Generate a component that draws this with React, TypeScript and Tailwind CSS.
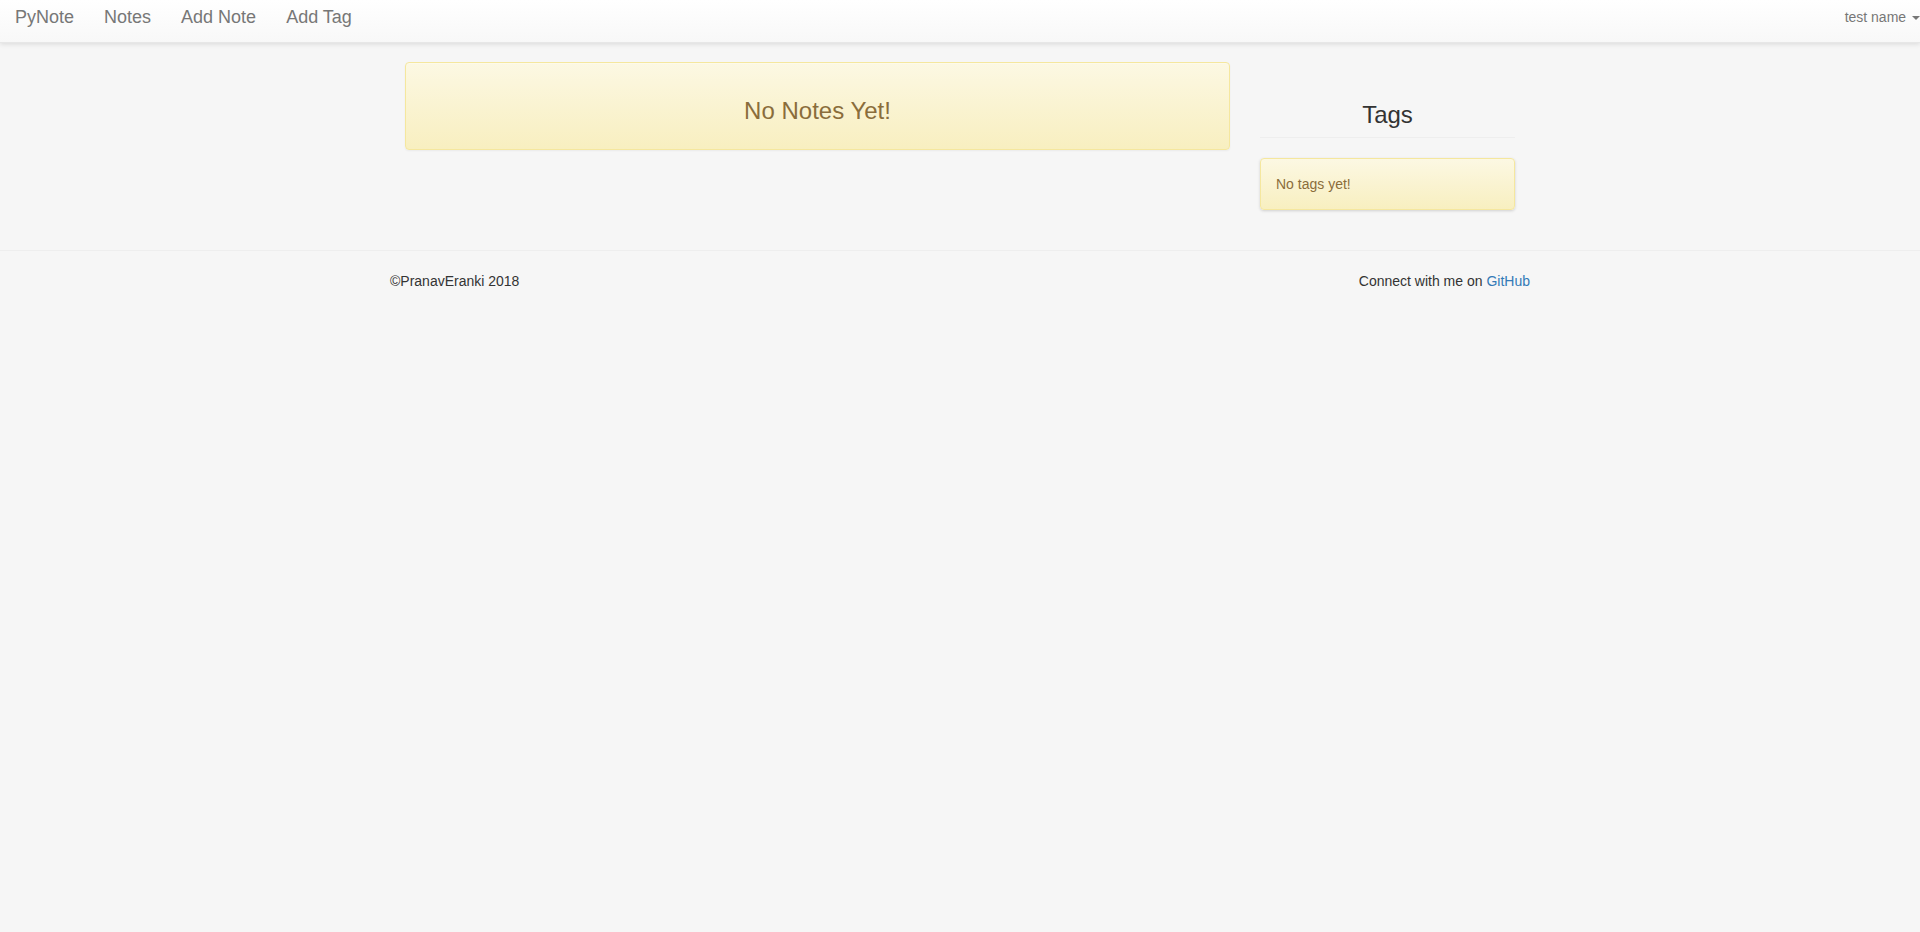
export default function App() {
  return (
    <div className="min-h-screen bg-[#f6f6f6] font-['Liberation_Sans',Arial,sans-serif] text-sm leading-5 text-[#333]">
      <nav className="flex h-[43px] items-start justify-between border-b border-[#e7e7e7] bg-linear-to-b/srgb from-white to-[#f8f8f8] text-[#777] shadow-[inset_0_1px_0_rgba(255,255,255,0.15),0_1px_5px_rgba(0,0,0,0.12)]">
        <div className="flex text-lg leading-5">
          <a href="#" className="px-[15px] py-[7px]">PyNote</a>
          <a href="#" className="px-[15px] py-[7px]">Notes</a>
          <a href="#" className="px-[15px] py-[7px]">Add Note</a>
          <a href="#" className="px-[15px] py-[7px]">Add Tag</a>
        </div>
        <button type="button" className="py-[7px]">
          test name{" "}
          <span className="ml-[2px] inline-block border-x-4 border-t-4 border-x-transparent border-t-[#777] align-middle" />
        </button>
      </nav>
      <main className="mx-auto mt-[19px] grid w-full max-w-[1140px] grid-cols-[3fr_1fr]">
        <div className="px-[15px]">
          <div className="rounded border border-[#f5e79e] bg-linear-to-b/srgb from-[#fcf8e3] to-[#f8efc0] px-[15px] pt-[35px] pb-[25px] text-center text-[#8a6d3b] shadow-[inset_0_1px_0_rgba(255,255,255,0.25),0_1px_2px_rgba(0,0,0,0.05)]">
            <h3 className="text-2xl leading-[26px]">No Notes Yet!</h3>
          </div>
        </div>
        <aside className="px-[15px] pt-10">
          <h3 className="border-b border-[#eee] pb-[9px] text-center text-2xl leading-[26px]">Tags</h3>
          <p className="mt-5 rounded border border-[#f5e79e] bg-linear-to-b/srgb from-[#fcf8e3] to-[#f8efc0] p-[15px] text-[#8a6d3b] shadow-[0_1px_3px_rgba(0,0,0,0.16)]">No tags yet!</p>
        </aside>
      </main>
      <footer className="mt-10 border-t border-[#eee] pt-5">
        <div className="mx-auto flex w-full max-w-[1140px] justify-between">
          <p>©PranavEranki 2018</p>
          <p>Connect with me on <a href="#" className="text-[#337ab7]">GitHub</a></p>
        </div>
      </footer>
    </div>
  );
}
